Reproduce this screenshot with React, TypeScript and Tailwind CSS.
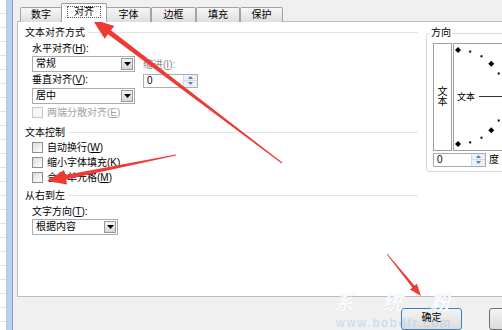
import React from "react";

const FONT = "font-['Liberation_Sans','Noto_Sans_CJK_SC',sans-serif]";

type Pt = [number, number];

// tapered arrow: thin tail, wider shaft near the head, triangular head
function arrowPoints(tail: Pt, tip: Pt, headLen: number, headW: number, w0: number, w1: number) {
  const dx = tip[0] - tail[0];
  const dy = tip[1] - tail[1];
  const len = Math.hypot(dx, dy);
  const ux = dx / len;
  const uy = dy / len;
  const nx = -uy;
  const ny = ux;
  const bx = tip[0] - ux * headLen;
  const by = tip[1] - uy * headLen;
  const p = (x: number, y: number) => `${x.toFixed(1)},${y.toFixed(1)}`;
  return [
    p(tail[0] + (nx * w0) / 2, tail[1] + (ny * w0) / 2),
    p(bx + (nx * w1) / 2, by + (ny * w1) / 2),
    p(bx + (nx * headW) / 2, by + (ny * headW) / 2),
    p(tip[0], tip[1]),
    p(bx - (nx * headW) / 2, by - (ny * headW) / 2),
    p(bx - (nx * w1) / 2, by - (ny * w1) / 2),
    p(tail[0] - (nx * w0) / 2, tail[1] - (ny * w0) / 2),
  ].join(" ");
}

const TABS = [
  { label: "数字", w: "w-[42px]" },
  { label: "对齐", w: "w-[46px]", active: true },
  { label: "字体", w: "w-[45px]" },
  { label: "边框", w: "w-[45px]" },
  { label: "填充", w: "w-[44px]" },
  { label: "保护", w: "w-[43px]" },
];

function Accel({ text, k }: { text: string; k: string }) {
  return (
    <>
      {text}(<span className="underline">{k}</span>)
    </>
  );
}

function SectionHeader({ title }: { title: string }) {
  return (
    <div className="flex items-center h-[13px]">
      <span className="text-[10px] leading-[13px]">{title}</span>
      <span className="flex-1 ml-[3px] h-px bg-[#dfe4ea]" />
    </div>
  );
}

function DropArrow() {
  return (
    <svg width="7" height="4" viewBox="0 0 7 4">
      <path d="M0 0 H7 L3.5 4 Z" fill="#000" />
    </svg>
  );
}

function Select({ value, w }: { value: string; w: string }) {
  return (
    <div className={`flex h-[16px] ${w} border border-[#a6adb6] bg-white`}>
      <span className="flex-1 pl-[3px] text-[10px] leading-[14px]">{value}</span>
      <span className="m-px w-[12px] flex items-center justify-center border border-[#9a9a9a] bg-linear-to-b from-[#f4f4f4] to-[#d6d6d6]">
        <DropArrow />
      </span>
    </div>
  );
}

function Spin({ w }: { w: string }) {
  return (
    <div className={`flex h-[14px] ${w} border border-[#abadb3] bg-white`}>
      <span className="flex-1 pl-[3px] text-[10px] leading-[12px]">0</span>
      <span className="w-[14px] flex flex-col border-l border-[#d3dae3] bg-[#edf1f6]">
        <span className="flex-1 flex items-center justify-center border-b border-[#d3dae3]">
          <svg width="5" height="3" viewBox="0 0 5 3">
            <path d="M0 3 H5 L2.5 0 Z" fill="#5a7fb0" />
          </svg>
        </span>
        <span className="flex-1 flex items-center justify-center">
          <svg width="5" height="3" viewBox="0 0 5 3">
            <path d="M0 0 H5 L2.5 3 Z" fill="#5a7fb0" />
          </svg>
        </span>
      </span>
    </div>
  );
}

function Check({ text, k, disabled }: { text: string; k: string; disabled?: boolean }) {
  return (
    <div className="flex items-center h-[12px] pl-[7px]">
      <span
        className={`w-[11px] h-[11px] border ${
          disabled ? "border-[#c8c8c8] bg-[#f7f7f7]" : "border-[#8e8f8f] bg-linear-to-br from-[#dcdcdc] to-white"
        }`}
      />
      <span className={`ml-[4px] text-[10px] leading-[12px] ${disabled ? "text-[#a3a3a3]" : ""}`}>
        <Accel text={text} k={k} />
      </span>
    </div>
  );
}

function OrientationDial() {
  const cx = 4;
  const cy = 53;
  const r = 47;
  const dots = [];
  for (let a = -90; a <= 90; a += 15) {
    const rad = (a * Math.PI) / 180;
    const x = cx + r * Math.cos(rad);
    const y = cy - r * Math.sin(rad);
    const big = a % 45 === 0;
    dots.push(
      big ? (
        <path key={a} d={`M${x} ${y - 3} L${x + 3} ${y} L${x} ${y + 3} L${x - 3} ${y} Z`} fill="#000" />
      ) : (
        <rect key={a} x={x - 1} y={y - 1} width="2" height="2" fill="#000" />
      )
    );
  }
  return (
    <div className="relative ml-px w-[80px] h-[108px] border border-[#a0a0a0] flex items-center pl-[3px]">
      <svg className="absolute inset-0" width="80" height="108">
        {dots}
      </svg>
      <span className="text-[9px] leading-[11px] mt-[1px]">文本</span>
      <span className="ml-[4px] w-[24px] h-px bg-[#333]" />
    </div>
  );
}

export default function App() {
  const arrows = [
    arrowPoints([282, 163], [92, 19], 22, 16, 1, 5),
    arrowPoints([176, 155], [47, 181], 19, 15, 1, 4.5),
    arrowPoints([387, 254], [421, 296], 12, 9, 0.8, 3),
  ];

  return (
    <div className={`relative w-[502px] h-[330px] overflow-hidden flex bg-[#f0f0f0] text-black ${FONT}`}>
      {/* sheet behind the dialog */}
      <div className="shrink-0 w-[7px] h-full border-r border-[#c6c6c6] bg-[repeating-linear-gradient(to_bottom,#ffffff_0px,#ffffff_13px,#e2e2e2_13px,#e2e2e2_14px)]" />
      <div className="shrink-0 w-[5px] h-full bg-[#b4d2f2]" />
      <div className="shrink-0 w-px h-full bg-[#8ea3bb]" />

      {/* dialog */}
      <div className="shrink-0 flex flex-col pl-[4px]">
        {/* tabs */}
        <div className="flex items-end h-[22px] pl-[3px] -mb-px relative z-10">
          {TABS.map((t) =>
            t.active ? (
              <div
                key={t.label}
                className={`${t.w} h-[19px] -mx-px border border-b-0 border-[#9a9a9a] rounded-t-[2px] bg-white flex items-start justify-center pt-[2px]`}
              >
                <span className="px-[6px] h-[12px] border border-dotted border-[#555] text-[10px] leading-[10px]">
                  {t.label}
                </span>
              </div>
            ) : (
              <div
                key={t.label}
                className={`${t.w} h-[15px] border border-b-0 border-[#a3a3a3] rounded-t-[2px] bg-linear-to-b from-[#f7f7f7] to-[#dedede] flex items-center justify-center text-[10px] leading-[12px]`}
              >
                {t.label}
              </div>
            )
          )}
        </div>

        {/* tab page */}
        <div className="w-[530px] h-[281px] border border-[#bdbdbd] bg-white flex">
          {/* left column */}
          <div className="w-[400px] pl-[7px] flex flex-col">
            <div className="mt-[4px]">
              <SectionHeader title="文本对齐方式" />
            </div>
            <div className="flex pl-[7px]">
              <div className="flex flex-col w-[103px]">
                <div className="mt-[4px] h-[12px] text-[10px] leading-[12px]">
                  <Accel text="水平对齐" k="H" />:
                </div>
                <div className="mt-px">
                  <Select value="常规" w="w-[103px]" />
                </div>
                <div className="mt-[2px] h-[12px] text-[10px] leading-[12px]">
                  <Accel text="垂直对齐" k="V" />:
                </div>
                <div className="mt-[2px]">
                  <Select value="居中" w="w-[103px]" />
                </div>
              </div>
              <div className="ml-[8px] flex flex-col">
                <div className="mt-[20px] h-[12px] text-[10px] leading-[12px] text-[#8a8a8a]">
                  <Accel text="缩进" k="I" />:
                </div>
                <div className="mt-[3px]">
                  <Spin w="w-[55px]" />
                </div>
              </div>
            </div>
            <div className="mt-[3px]">
              <Check text="两端分散对齐" k="E" disabled />
            </div>

            <div className="mt-[7px]">
              <SectionHeader title="文本控制" />
            </div>
            <div className="mt-[3px]">
              <Check text="自动换行" k="W" />
            </div>
            <div className="mt-[3px]">
              <Check text="缩小字体填充" k="K" />
            </div>
            <div className="mt-[3px]">
              <Check text="合并单元格" k="M" />
            </div>

            <div className="mt-[5px]">
              <SectionHeader title="从右到左" />
            </div>
            <div className="pl-[7px] flex flex-col">
              <div className="mt-[4px] h-[12px] text-[10px] leading-[12px]">
                <Accel text="文字方向" k="T" />:
              </div>
              <div className="mt-px">
                <Select value="根据内容" w="w-[86px]" />
              </div>
            </div>
          </div>

          {/* orientation group */}
          <div className="ml-[8px] mt-[11px]">
            <div className="relative w-[100px] h-[139px] border border-[#d5d9de] rounded-[3px] pl-[6px] pt-[9px]">
              <span className="absolute -top-[7px] left-[2px] px-[2px] bg-white text-[10px] leading-[12px]">方向</span>
              <div className="flex">
                <div className="w-[21px] h-[108px] border border-[#a0a0a0] flex flex-col items-center justify-center text-[10px] leading-[10px]">
                  <span>文</span>
                  <span>本</span>
                </div>
                <OrientationDial />
              </div>
              <div className="mt-[2px] flex items-center">
                <Spin w="w-[53px]" />
                <span className="ml-[3px] text-[10px] leading-[12px]">度</span>
              </div>
            </div>
          </div>
        </div>

        {/* buttons */}
        <div className="flex pl-[384px] pt-[11px]">
          <div className="w-[61px] h-[22px] border border-[#3d80b3] rounded-[3px] bg-linear-to-b from-[#f4f4f4] to-[#dcdcdc] flex justify-center pt-[3px] text-[10px] leading-[12px]">
            确定
          </div>
          <div className="ml-[27px] w-[61px] h-[22px] border border-[#707070] rounded-[3px] bg-linear-to-b from-[#f4f4f4] to-[#dcdcdc] flex justify-center pt-[3px] text-[10px] leading-[12px]">
            取消
          </div>
        </div>
      </div>

      {/* watermark */}
      <div className="absolute left-[334px] top-[292px] text-[20px] leading-[22px] font-bold italic tracking-[28px] text-white/90 [text-shadow:0_0_1px_#c9d6e3]">
        系统粉
      </div>
      <div className="absolute left-[336px] top-[317px] text-[12px] leading-[13px] tracking-[2px] text-[#9cc4ea] opacity-50">
        www.bobdfr.com
      </div>

      {/* annotation arrows */}
      <svg className="absolute inset-0 pointer-events-none" width="502" height="330">
        {arrows.map((pts, i) => (
          <polygon key={i} points={pts} fill="#ee3a35" />
        ))}
      </svg>
    </div>
  );
}
